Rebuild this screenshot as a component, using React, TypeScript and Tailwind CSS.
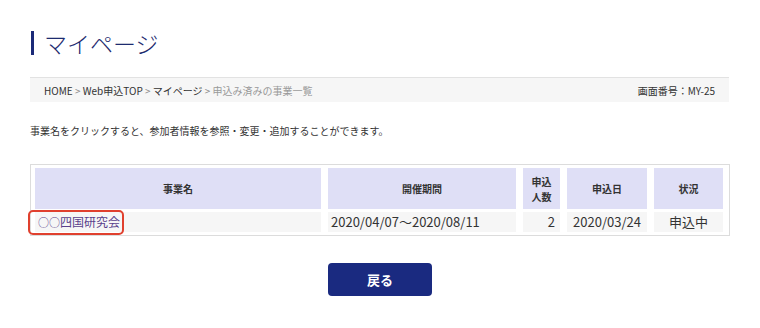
import React from "react";

const font = { fontFamily: '"Noto Sans CJK JP", "Noto Sans", sans-serif' };

export default function App() {
  return (
    <div className="w-[760px] h-[328px] bg-white text-[#333] relative overflow-hidden" style={font}>
      <div className="pl-[31px] pt-[30px] flex items-center h-[56px]">
        <div className="w-[3px] h-[24px] bg-[#1b2a78]" />
        <div className="ml-[10px] text-[23px] leading-[24px] text-[#1d2b6f] font-light">マイページ</div>
      </div>
      <div className="mt-[21px] ml-[30px] w-[699px] h-[25px] border-t border-[#e2e2e2] bg-[#f6f6f6] flex items-center justify-between pl-[14px] pr-[14px] text-[10px]">
        <div>
          <span>HOME</span>
          <span className="text-[#888]">&nbsp;&gt;&nbsp;</span>
          <span>Web申込TOP</span>
          <span className="text-[#888]">&nbsp;&gt;&nbsp;</span>
          <span>マイページ</span>
          <span className="text-[#888]">&nbsp;&gt;&nbsp;</span>
          <span className="text-[#999]">申込み済みの事業一覧</span>
        </div>
        <div>画面番号：MY-25</div>
      </div>
      <div className="ml-[30px] mt-[22px] text-[10px] leading-[14px]">
        事業名をクリックすると、参加者情報を参照・変更・追加することができます。
      </div>
      <div className="ml-[30px] mt-[26px] w-[700px] border border-[#dcdcdc] pt-[3px] pb-[3px] pl-[4px]">
        <div className="grid grid-cols-[286px_188px_37px_80px_69px] gap-x-[7px] gap-y-[3px]">
          <div className="h-[41px] bg-[#dfdff6] flex items-center justify-center text-[10px] font-bold">事業名</div>
          <div className="h-[41px] bg-[#dfdff6] flex items-center justify-center text-[10px] font-bold">開催期間</div>
          <div className="h-[41px] bg-[#dfdff6] flex flex-col items-center justify-center text-[10px] leading-[15px] font-bold">
            <span>申込</span>
            <span>人数</span>
          </div>
          <div className="h-[41px] bg-[#dfdff6] flex items-center justify-center text-[10px] font-bold">申込日</div>
          <div className="h-[41px] bg-[#dfdff6] flex items-center justify-center text-[10px] font-bold">状況</div>

          <div className="h-[20px] bg-[#f6f6f6] flex items-center pl-[3px] text-[12px] relative">
            <span className="text-[#5a3f8c]">
              <span className="text-[11px]">○○</span>四国研究会
            </span>
            <div className="absolute left-[-7px] top-[-2px] w-[96px] h-[25px] border-2 border-[#e0402e] rounded-[5px]" />
          </div>
          <div className="h-[20px] bg-[#f6f6f6] flex items-center pl-[3px] text-[13px]">2020/04/07～2020/08/11</div>
          <div className="h-[20px] bg-[#f6f6f6] flex items-center justify-end pr-[5px] text-[13px]">2</div>
          <div className="h-[20px] bg-[#f6f6f6] flex items-center justify-center text-[13px]">2020/03/24</div>
          <div className="h-[20px] bg-[#f6f6f6] flex items-center justify-center text-[13px]">申込中</div>
        </div>
      </div>
      <div className="mt-[27px] flex justify-center">
        <button className="w-[104px] h-[33px] rounded-[4px] bg-[#1a2a80] text-white text-[13px] font-bold flex items-center justify-center">
          戻る
        </button>
      </div>
    </div>
  );
}
